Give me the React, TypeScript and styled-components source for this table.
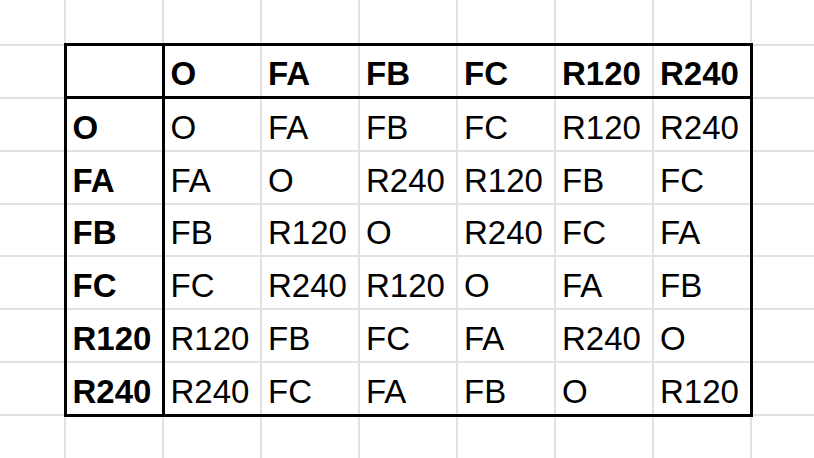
import styled, { createGlobalStyle } from "styled-components";

const GlobalStyle = createGlobalStyle`
    html, body {
        margin: 0;
        padding: 0;
        background: #ffffff;
        overflow: hidden;
    }
    body {
        font-family: "Liberation Sans", Arial, sans-serif;
        color: #000000;
    }
`

const ops = ['O', 'FA', 'FB', 'FC', 'R120', 'R240'];

// Cayley table of the symmetry group, row op applied then column op
const products: string[][] = [
    ['O', 'FA', 'FB', 'FC', 'R120', 'R240'],
    ['FA', 'O', 'R240', 'R120', 'FB', 'FC'],
    ['FB', 'R120', 'O', 'R240', 'FC', 'FA'],
    ['FC', 'R240', 'R120', 'O', 'FA', 'FB'],
    ['R120', 'FB', 'FC', 'FA', 'R240', 'O'],
    ['R240', 'FC', 'FA', 'FB', 'O', 'R120'],
];

// sheet has one blank column/row around the table on each side
const SHEET_COLS = 9;
const SHEET_ROWS = 9;
const FIRST = 1;
const LAST = 7;

function cellText(r: number, c: number): string {
    const tr = r - FIRST;
    const tc = c - FIRST;
    if (tr < 0 || tc < 0 || tr > 6 || tc > 6) return '';
    if (tr === 0 && tc === 0) return '';
    if (tr === 0) return ops[tc - 1];
    if (tc === 0) return ops[tr - 1];
    return products[tr - 1][tc - 1];
}

export default function App() {
    const rows = Array.from({ length: SHEET_ROWS }, (_, r) => r);
    const cols = Array.from({ length: SHEET_COLS }, (_, c) => c);
    return (
        <>
            <GlobalStyle />
            <Sheet>
                <colgroup>
                    {cols.map(c => <Col key={c} />)}
                </colgroup>
                <tbody>
                    {rows.map(r => (
                        <Row key={r}>
                            {cols.map(c => {
                                const inTable = r >= FIRST && r <= LAST && c >= FIRST && c <= LAST;
                                return (
                                    <Cell
                                        key={c}
                                        $bold={inTable && (r === FIRST || c === FIRST)}
                                        $top={inTable && (r === FIRST || r === FIRST + 1)}
                                        $bottom={inTable && (r === LAST || r === FIRST)}
                                        $left={inTable && (c === FIRST || c === FIRST + 1)}
                                        $right={inTable && (c === LAST || c === FIRST)}
                                    >
                                        {cellText(r, c)}
                                    </Cell>
                                );
                            })}
                        </Row>
                    ))}
                </tbody>
            </Sheet>
        </>
    )
}

const Sheet = styled.table`
    border-collapse: collapse;
    table-layout: fixed;
    width: ${SHEET_COLS * 98}px;
    margin-left: -34px;
    margin-top: -9px;
`

const Col = styled.col`
    width: 98px;
`

const Row = styled.tr`
    height: 52.9px;
`

const black = '3px solid #000000';
const grey = '2px solid #e1e1e1';

const Cell = styled.td<{ $bold: boolean; $top: boolean; $bottom: boolean; $left: boolean; $right: boolean }>`
    padding: 0 3px 4px 6px;
    vertical-align: bottom;
    white-space: nowrap;
    overflow: hidden;
    font-size: 33px;
    line-height: 36px;
    font-weight: ${p => p.$bold ? 700 : 400};
    border-top: ${p => p.$top ? black : grey};
    border-bottom: ${p => p.$bottom ? black : grey};
    border-left: ${p => p.$left ? black : grey};
    border-right: ${p => p.$right ? black : grey};
`
